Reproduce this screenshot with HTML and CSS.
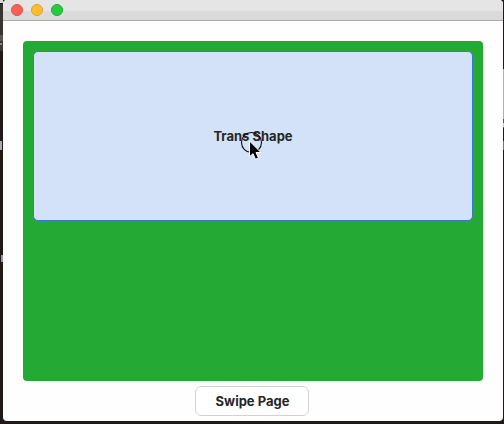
FILE: index.html
```html
<!DOCTYPE html>
<html lang="en">
<head>
<meta charset="utf-8">
<title>Swipe Page</title>
<link rel="stylesheet" href="styles.css">
</head>
<body>
<div class="backdrop"><i class="bd-line"></i><i class="bd-tab"></i><i class="bd-edge"></i><i class="bd-mark"></i><i class="bd-mark low"></i><i class="bd-right"></i><i class="bd-right low"></i></div>
<main class="window">
  <header class="titlebar"><span class="light close"></span><span class="light minimise"></span><span class="light zoom"></span></header>
  <section class="content">
    <div class="page"><div class="shape"><span>Trans Shape</span></div></div>
    <button class="swipe">Swipe Page</button>
  </section>
</main>
<svg class="pointer" width="26" height="32" viewBox="0 0 26 32">
  <circle cx="11.5" cy="11.5" r="10" fill="none" stroke="#0a0a0a" stroke-width="1.1"/>
  <path d="M9.5 10v15.8l3.5-3.1 2.5 5.6 3-1.3-2.5-5.5h5z" fill="#000" stroke="#fff" stroke-width="1"/>
</svg>
</body>
</html>
```
FILE: styles.css
```css
* { box-sizing: border-box; }
body {
  margin: 0;
  width: 504px;
  height: 424px;
  padding: 0 1px 3px 3px;
  overflow: hidden;
  position: relative;
  background: #1f1a18;
  font-family: Inter, "Liberation Sans", sans-serif;
}
.backdrop i { position: absolute; }
.bd-line { left: 0; top: 0; width: 3px; height: 3px; background: #d8d8d8; }
.bd-tab { left: 0; top: 4px; width: 3px; height: 47px; background: linear-gradient(#383432 31px, #5a5654 31px 37px, #3c3836 37px); }
.bd-edge { left: 0; top: 43px; width: 2px; height: 2px; background: #8a8786; }
.bd-mark { left: 0; top: 141px; width: 2px; height: 9px; background: #aaa; }
.bd-mark.low { left: 1px; top: 255px; height: 7px; background: #999; }
.bd-right { left: 503px; top: 69px; width: 1px; height: 59px; background: linear-gradient(#b0b0b0 50px, #555 50px 54px, #ccc 54px 58px, #555 58px); }
.bd-right.low { top: 141px; height: 9px; background: #777; }
.window {
  position: relative;
  display: flex;
  flex-direction: column;
  height: 421px;
  overflow: hidden;
  background: #fefefe;
  border-radius: 4px;
}
.titlebar {
  flex: 0 0 21px;
  display: flex;
  gap: 8px;
  padding: 4px 8px;
  background: linear-gradient(#e5e5e5 11px, #dadada 11px);
  border-bottom: 1px solid #aaa;
}
.light { width: 12px; height: 12px; border-radius: 50%; border: 1px solid; }
.close { background: #ff5f58; border-color: #e14d47; }
.minimise { background: #ffbd2e; border-color: #dfa02a; }
.zoom { background: #27cb40; border-color: #1fac2d; }
.content {
  display: flex;
  flex-direction: column;
  align-items: center;
  gap: 5px;
  padding-top: 20px;
}
.page {
  width: 460px;
  height: 340px;
  padding: 10px;
  background: #24aa34;
  border-radius: 4px;
}
.shape {
  height: 170px;
  display: flex;
  align-items: center;
  justify-content: center;
  background: #d4e2f9;
  border: 1px solid #3a78cf;
  border-radius: 5px;
  font-size: 13px;
  font-weight: 700;
  color: #262626;
}
.swipe {
  width: 114px;
  height: 30px;
  margin-right: 2px;
  padding: 0 0 0 1px;
  background: #fff;
  border: 1px solid #d2d2d2;
  border-radius: 6px;
  font: 700 13px Inter, "Liberation Sans", sans-serif;
  color: #262626;
}
.pointer { position: absolute; left: 240px; top: 131px; }
```
